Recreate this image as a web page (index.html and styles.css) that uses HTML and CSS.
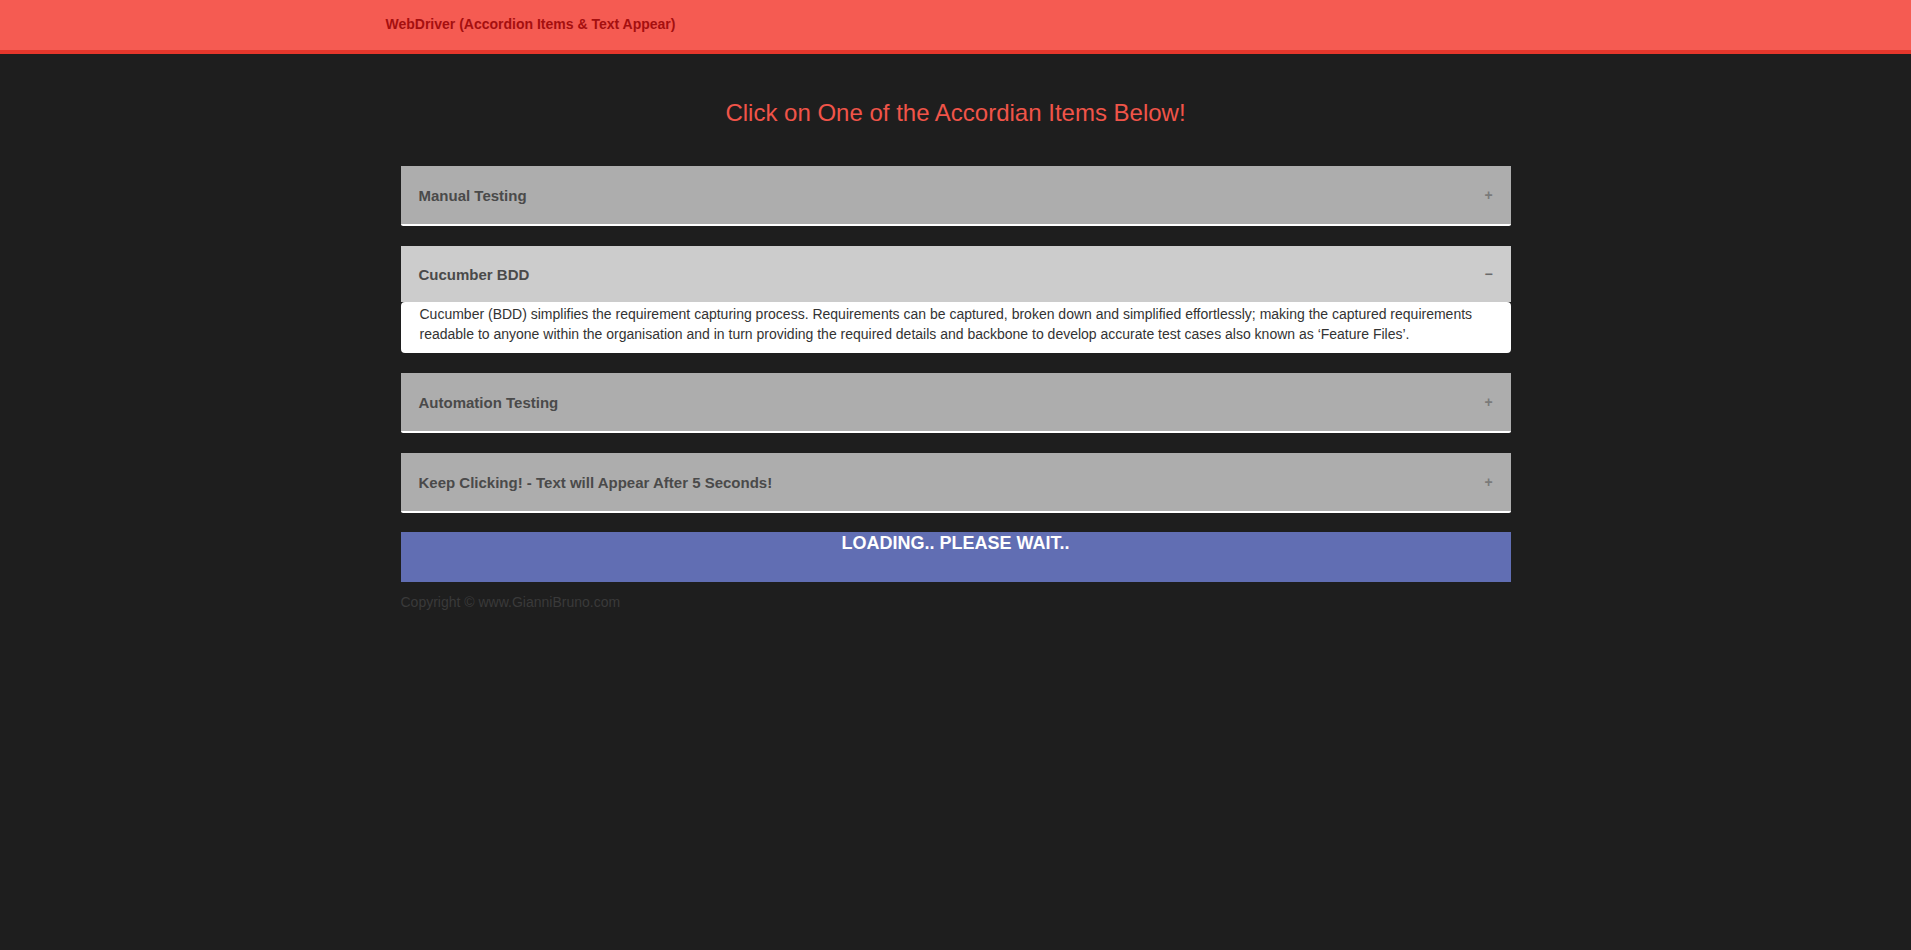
FILE: index.html
```html
<!DOCTYPE html>
<html lang="en">
<head>
<meta charset="utf-8">
<title>WebDriver (Accordion Items &amp; Text Appear)</title>
<link rel="stylesheet" href="styles.css">
</head>
<body>
<header class="topbar">
  <div class="topbar-inner">
    <span class="brand">WebDriver (Accordion Items &amp; Text Appear)</span>
  </div>
</header>
<main class="container">
  <h1 class="page-title">Click on One of the Accordian Items Below!</h1>
  <div class="accordion">
    <div class="item">
      <div class="item-head closed"><span class="item-title">Manual Testing</span><span class="sign">+</span></div>
    </div>
    <div class="item">
      <div class="item-head open"><span class="item-title">Cucumber BDD</span><span class="sign minus">&minus;</span></div>
      <div class="item-body">Cucumber (BDD) simplifies the requirement capturing process. Requirements can be captured, broken down and simplified effortlessly; making the captured requirements readable to anyone within the organisation and in turn providing the required details and backbone to develop accurate test cases also known as ‘Feature Files’.</div>
    </div>
    <div class="item">
      <div class="item-head closed"><span class="item-title">Automation Testing</span><span class="sign">+</span></div>
    </div>
    <div class="item">
      <div class="item-head closed"><span class="item-title">Keep Clicking! - Text will Appear After 5 Seconds!</span><span class="sign">+</span></div>
    </div>
  </div>
  <div class="loading">LOADING.. PLEASE WAIT..</div>
  <p class="copyright">Copyright © www.GianniBruno.com</p>
</main>
</body>
</html>
```

FILE: styles.css
```css
html, body {
  margin: 0;
  padding: 0;
}
body {
  background: #1e1e1e;
  font-family: "Liberation Sans", Arial, sans-serif;
  color: #333;
  min-height: 950px;
}
.topbar {
  background: #f55b52;
  border-bottom: 4px solid #e6372c;
  height: 50px;
}
.topbar-inner {
  width: 1140px;
  margin: 0 auto;
  height: 50px;
  display: flex;
  align-items: center;
}
.brand {
  font-size: 14px;
  font-weight: bold;
  color: #a50f0f;
  margin-left: 0;
  margin-top: -2px;
}
.container {
  width: 1110px;
  margin: 0 auto;
}
.page-title {
  margin: 45px 0 39px;
  font-size: 24px;
  line-height: 28px;
  font-weight: normal;
  text-align: center;
  color: #f05449;
}
.accordion {
  display: flex;
  flex-direction: column;
  gap: 20px;
}
.item-head {
  display: flex;
  align-items: center;
  padding: 0 18px 0 18px;
  font-size: 15px;
  font-weight: bold;
  color: #4a4a4a;
}
.item-head.closed {
  background: #adadad;
  height: 58px;
  border-bottom: 2px solid #ffffff;
  border-radius: 0 0 2px 2px;
}
.item-head.open {
  background: #cccccc;
  height: 56px;
}
.sign {
  margin-left: auto;
  color: #7a7a7a;
  font-size: 14px;
  width: 8px;
  text-align: center;
}
.sign.minus {
  color: #6a6a6a;
}
.item-body {
  background: #ffffff;
  border-radius: 4px;
  padding: 2px 17px 9px 19px;
  font-size: 14px;
  line-height: 20px;
  color: #333;
}
.loading {
  margin-top: 19px;
  background: #616eb3;
  height: 50px;
  box-sizing: border-box;
  padding-top: 1px;
  color: #ffffff;
  font-size: 18px;
  line-height: 20px;
  font-weight: bold;
  text-align: center;
}
.copyright {
  margin: 10px 0 0;
  font-size: 14px;
  line-height: 20px;
  color: #3a3a3a;
}
```
